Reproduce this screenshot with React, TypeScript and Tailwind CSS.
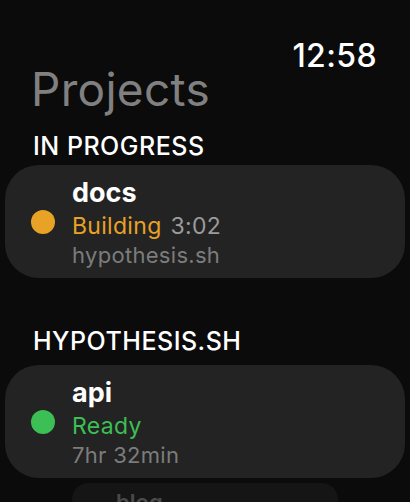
const PROJECT_FONT = "font-['Inter','Roboto',sans-serif]"

type Project = {
  name: string
  status: string
  statusColor: string
  dot: string
  extra?: string
  meta: string
}

const IN_PROGRESS: Project[] = [
  { name: 'docs', status: 'Building', statusColor: 'text-[#e8a225]', dot: 'bg-[#e8a225]', extra: '3:02', meta: 'hypothesis.sh' },
]

const HYPOTHESIS: Project[] = [
  { name: 'api', status: 'Ready', statusColor: 'text-[#3cbf55]', dot: 'bg-[#3cbf55]', meta: '7hr 32min' },
]

function ProjectCard({ p }: { p: Project }) {
  return (
    <div className="mx-[5px] flex items-center rounded-[34px] bg-[#232323] pt-[11px] pb-[10px] pl-[26px]">
      <span className={`h-6 w-6 shrink-0 rounded-full ${p.dot}`} />
      <div className="ml-[17px] flex flex-col">
        <span className="text-[27px] leading-[34px] font-bold text-white">{p.name}</span>
        <span className="text-[23px] leading-[32px] tracking-[0.3px]">
          <span className={p.statusColor}>{p.status}</span>
          {p.extra && <span className="ml-[9px] text-[#9b9b9b]">{p.extra}</span>}
        </span>
        <span className="text-[22px] leading-[26px] tracking-[0.3px] text-[#7c7c7c]">{p.meta}</span>
      </div>
    </div>
  )
}

export default function App() {
  return (
    <div className={`${PROJECT_FONT} flex h-[502px] w-[410px] flex-col overflow-hidden bg-[#0b0b0b]`}>
      {/* status bar */}
      <div className="mt-[42px] flex justify-end pr-[33px]">
        <span className="text-[32px] leading-[27px] font-medium tracking-[0.4px] text-white">12:58</span>
      </div>

      <h1 className="pl-[31px] text-[46px] leading-[40px] font-normal tracking-[0.3px] text-[#808080]">Projects</h1>

      <h2 className="mt-[23px] pl-[33px] text-[25px] leading-[28px] font-medium tracking-[0.5px] text-white">
        IN PROGRESS
      </h2>
      <div className="mt-[5px] flex flex-col">
        {IN_PROGRESS.map(p => <ProjectCard key={p.name} p={p} />)}
      </div>

      <h2 className="mt-[49px] pl-[33px] text-[25px] leading-[28px] font-medium tracking-[0.5px] text-white">
        HYPOTHESIS.SH
      </h2>
      <div className="mt-[10px] flex flex-col">
        {HYPOTHESIS.map(p => <ProjectCard key={p.name} p={p} />)}
      </div>

      {/* next card, pushed back in the stack */}
      <div className="mx-auto mt-[5px] w-[266px] shrink-0 rounded-[30px] bg-[#151515] pt-[6px] pl-[44px]">
        <span className="text-[22px] leading-[26px] font-semibold text-[#4a4a4a]">blog</span>
      </div>
    </div>
  )
}
